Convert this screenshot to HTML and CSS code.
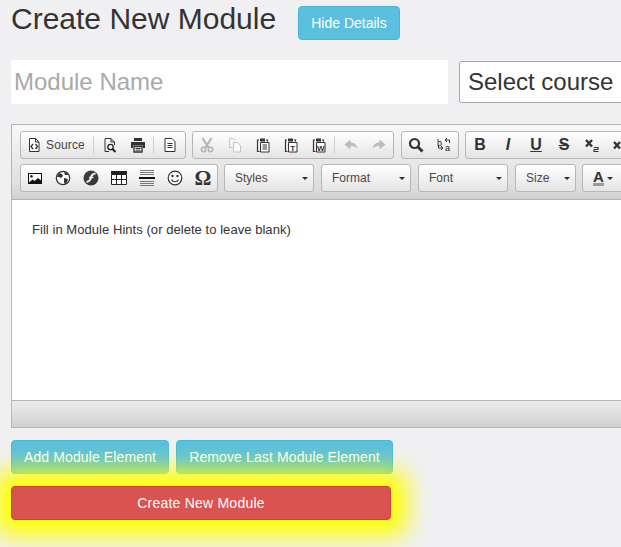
FILE: index.html
```html
<!DOCTYPE html>
<html lang="en">
<head>
    <meta charset="UTF-8">
    <meta name="viewport" content="width=device-width, initial-scale=1.0">
    <title>Create New Module</title>
    <link rel="stylesheet" href="styles.css">
</head>
<body>
    <svg class="icon-defs" width="0" height="0">
        <symbol id="i-source" viewBox="0 0 16 16"><path d="M3.500 1.500h6l3.500 3.500v9.500h-9.500z M9.500 1.500v3.500h3.500" fill="#fff" stroke="#333"/><path d="M7 7l-2 2.500 2 2.500M9.500 7l2 2.500-2 2.500" fill="none" stroke="#333" stroke-width="1.300"/></symbol>
        <symbol id="i-preview" viewBox="0 0 16 16"><path d="M7 14.500h-4v-13h6l3.500 3.500v3M9 1.500v3.500h3.500" fill="none" stroke="#333"/><circle cx="8.500" cy="10" r="2.700" fill="#fff" stroke="#222" stroke-width="1.300"/><path d="M10.500 12l3 3" stroke="#222" stroke-width="2"/></symbol>
        <symbol id="i-print" viewBox="0 0 16 16"><path d="M4 1h8v3h-8zM1 5h14v6h-2v-2.500h-10v2.500h-2z" fill="#333"/><path d="M4 9.500h8v5.500h-8z" fill="#fff" stroke="#333" stroke-width="1.400"/><path d="M5.500 11.500h5M5.500 13.200h5" stroke="#333"/></symbol>
        <symbol id="i-newpage" viewBox="0 0 16 16"><path d="M3 1.500h7l3 3v10h-10z" fill="#fff" stroke="#333"/><path d="M5.500 6.500h5M5.500 8.500h5M5.500 10.500h5" stroke="#333"/></symbol>
        <symbol id="i-cut" viewBox="0 0 16 16"><g fill="none" stroke="#b4b4b4" stroke-width="2"><path d="M3.500 1l6 9.500M12.500 1l-6 9.500"/><circle cx="4.500" cy="12.500" r="2.200" stroke-width="1.500"/><circle cx="11.500" cy="12.500" r="2.200" stroke-width="1.500"/></g></symbol>
        <symbol id="i-copy" viewBox="0 0 16 16"><path d="M2.500 1.500h4l2 2M2.500 1.500v9h3" fill="none" stroke="#c8c8c8"/><path d="M6.500 5.500h4l3 3v6.500h-7z" fill="#fafafa" stroke="#c4c4c4"/></symbol>
        <symbol id="i-paste" viewBox="0 0 16 16"><path d="M4 3h-1.500v11.500h2M11 3h1.500v1.500" fill="none" stroke="#333" stroke-width="1.200"/><path d="M5 1.500h5v3h-5z" fill="#333"/><path d="M5.500 5.500h8.500v9.500h-8.500z" fill="#fff" stroke="#333"/><path d="M7.500 8h4.500M7.500 10h4.500M7.500 12h4.500" stroke="#333"/></symbol>
        <symbol id="i-clip" viewBox="0 0 16 16"><path d="M4 3h-1.500v11.500h2M11 3h1.500v1.500" fill="none" stroke="#333" stroke-width="1.200"/><path d="M5 1.500h5v3h-5z" fill="#333"/><path d="M5.500 5.500h8.500v9.500h-8.500z" fill="#fff" stroke="#333"/></symbol>
        <symbol id="i-undo" viewBox="0 0 16 16"><path d="M1.500 7.500l6-5v3c4 0 6.500 2.500 7 6.500-1.500-2-3.500-3-7-3v3.500z" fill="#bcbcbc"/></symbol>
        <symbol id="i-redo" viewBox="0 0 16 16"><path d="M14.500 7.500l-6-5v3c-4 0-6.500 2.500-7 6.500 1.500-2 3.500-3 7-3v3.500z" fill="#bcbcbc"/></symbol>
        <symbol id="i-find" viewBox="0 0 16 16"><circle cx="6.500" cy="6.500" r="4.500" fill="none" stroke="#333" stroke-width="2.200"/><path d="M10 10l4.500 4.500" stroke="#333" stroke-width="3"/></symbol>
        <symbol id="i-image" viewBox="0 0 16 16"><path d="M1 3h14v11h-14z" fill="#111"/><path d="M2 4h12v6.500l-3-2.500-3.500 3-2-1.500-3.500 3z" fill="#fff"/><circle cx="4.500" cy="6.200" r="1.200" fill="#111"/></symbol>
        <symbol id="i-globe" viewBox="0 0 16 16"><circle cx="8" cy="8" r="6.700" fill="#fff" stroke="#333" stroke-width="1.200"/><path d="M4 3l3 1 1 2-2 2-2-1-2 0zM9 8l4 1-1 3-2 2.500-1-2.500zM9 2l3 1 1 2-3 0z" fill="#333"/></symbol>
        <symbol id="i-flash" viewBox="0 0 16 16"><circle cx="8" cy="8" r="7.500" fill="#3a3a3a"/><path d="M12.500 3.500c-3 .2-4 1.500-4.500 4-.4 2-1.300 3.800-4.500 4.500" fill="none" stroke="#eee" stroke-width="1.900"/><path d="M6 7.500h4.500" stroke="#eee" stroke-width="1.400"/></symbol>
        <symbol id="i-table" viewBox="0 0 16 16"><path d="M0 1h16v3h-16z" fill="#222"/><path d="M.500 4.500h15v10h-15zM5.500 4.500v10M10.500 4.500v10M.500 9.500h15" fill="#fff" stroke="#222"/></symbol>
        <symbol id="i-hr" viewBox="0 0 16 16"><path d="M1 .500h14M1 2.500h14M1 4.500h14M1 11.500h14M1 13.500h14M1 15.500h14" stroke="#777"/><path d="M0 8h16" stroke="#111" stroke-width="2"/></symbol>
        <symbol id="i-smile" viewBox="0 0 16 16"><circle cx="8" cy="8" r="6.800" fill="#fff" stroke="#333" stroke-width="1.200"/><circle cx="5.500" cy="6" r="1.200" fill="#333"/><circle cx="10.500" cy="6" r="1.200" fill="#333"/><path d="M4.500 9.500c1.500 3 5.500 3 7 0" fill="none" stroke="#333" stroke-width="1.200"/></symbol>
        <symbol id="i-sub" viewBox="0 0 16 16"><path d="M2 3l6 6.500M8 3l-6 6.500" stroke="#333" stroke-width="2.400"/><path d="M10 10.500h4v2h-4v2h4.500" fill="none" stroke="#333" stroke-width="1.100"/></symbol>
        <symbol id="i-sup" viewBox="0 0 16 16"><path d="M2 5l6 6.500M8 5l-6 6.500" stroke="#333" stroke-width="2.400"/></symbol>
    </svg>

    <div class="title-row">
        <h1>Create New Module</h1>
        <button type="button" class="btn btn-info btn-hide">Hide Details</button>
    </div>

    <form class="module-form">
        <div class="name-row">
            <input type="text" class="module-name" placeholder="Module Name">
            <select class="course-select"><option>Select course</option></select>
        </div>

        <div class="editor">
            <div class="toolbar">
                <div class="tool-row">
                    <div class="group group-doc">
                        <a class="tool tool-text"><svg><use href="#i-source"/></svg><span>Source</span></a>
                        <i class="sep"></i>
                        <a class="tool"><svg><use href="#i-preview"/></svg></a>
                        <a class="tool"><svg><use href="#i-print"/></svg></a>
                        <i class="sep"></i>
                        <a class="tool"><svg><use href="#i-newpage"/></svg></a>
                    </div>
                    <div class="group">
                        <a class="tool"><svg><use href="#i-cut"/></svg></a>
                        <a class="tool"><svg><use href="#i-copy"/></svg></a>
                        <a class="tool"><svg><use href="#i-paste"/></svg></a>
                        <a class="tool"><svg viewBox="0 0 16 16"><use href="#i-clip"/><text x="9.750" y="13.500" class="svg-tiny" text-anchor="middle">T</text></svg></a>
                        <a class="tool"><svg viewBox="0 0 16 16"><use href="#i-clip"/><text x="9.750" y="13.500" class="svg-tiny" text-anchor="middle">W</text></svg></a>
                        <i class="sep"></i>
                        <a class="tool"><svg><use href="#i-undo"/></svg></a>
                        <a class="tool"><svg><use href="#i-redo"/></svg></a>
                    </div>
                    <div class="group group-find">
                        <a class="tool"><svg><use href="#i-find"/></svg></a>
                        <a class="tool"><svg viewBox="0 0 16 16"><text x="1" y="8.500" class="svg-small">b</text><text x="9" y="14" class="svg-small">a</text><path d="M9 3h4.500v3M9 3l2-2M9 3l2 2M7 11h-4.500v-2.500M7 11l-2-2M7 11l-2 2" fill="none" stroke="#333"/></svg></a>
                    </div>
                    <div class="group">
                        <a class="tool glyph"><b>B</b></a>
                        <a class="tool glyph"><b><em>I</em></b></a>
                        <a class="tool glyph"><b class="under">U</b></a>
                        <a class="tool glyph"><b class="strike">S</b></a>
                        <a class="tool"><svg><use href="#i-sub"/></svg></a>
                        <a class="tool"><svg><use href="#i-sup"/></svg></a>
                    </div>
                </div>
                <div class="tool-row">
                    <div class="group">
                        <a class="tool"><svg><use href="#i-image"/></svg></a>
                        <a class="tool"><svg><use href="#i-globe"/></svg></a>
                        <a class="tool"><svg><use href="#i-flash"/></svg></a>
                        <a class="tool"><svg><use href="#i-table"/></svg></a>
                        <a class="tool"><svg><use href="#i-hr"/></svg></a>
                        <a class="tool"><svg><use href="#i-smile"/></svg></a>
                        <a class="tool glyph omega"><b>Ω</b></a>
                    </div>
                    <div class="group combo combo-wide"><span>Styles</span><i class="caret"></i></div>
                    <div class="group combo combo-wide"><span>Format</span><i class="caret"></i></div>
                    <div class="group combo combo-wide"><span>Font</span><i class="caret"></i></div>
                    <div class="group combo combo-size"><span>Size</span><i class="caret"></i></div>
                    <div class="group">
                        <a class="tool tool-color"><b>A</b><i class="caret"></i></a>
                    </div>
                </div>
            </div>
            <div class="editor-body">
                <p>Fill in Module Hints (or delete to leave blank)</p>
            </div>
            <div class="editor-bottom"></div>
        </div>

        <div class="element-btns">
            <button type="button" class="btn btn-info btn-add">Add Module Element</button>
            <button type="button" class="btn btn-info btn-remove">Remove Last Module Element</button>
        </div>
        <button type="submit" class="btn btn-danger btn-create">Create New Module</button>
    </form>
</body>
</html>
```
FILE: styles.css
```css
html, body {
    height: 100%;
    margin: 0;
    padding: 0;
    overflow: hidden;
}
body {
    background: #f0f0f3;
    color: #333;
    font-family: "Liberation Sans", Arial, sans-serif;
    padding-left: 11px;
    width: 900px;
}
.icon-defs { position: absolute; }
.svg-tiny { font: bold 8px "Liberation Sans", sans-serif; fill: #333; }
.svg-small { font: 9px "Liberation Sans", sans-serif; fill: #222; }

.title-row {
    display: flex;
    align-items: flex-start;
    height: 60px;
}
h1 {
    margin: 0;
    width: 287px;
    font-size: 30px;
    font-weight: 400;
    line-height: 38px;
    color: #333;
}
.btn {
    display: block;
    height: 34px;
    padding: 0;
    font-family: inherit;
    font-size: 14px;
    letter-spacing: .12px;
    border-radius: 4px;
    border: 1px solid transparent;
    color: #fff;
    cursor: pointer;
}
.btn-info { background: #5bc0de; border-color: #46b8da; }
.btn-danger { background: #d9534f; border-color: #d43f3a; }
.btn-hide { width: 102px; margin-top: 6px; letter-spacing: 0; }

.name-row {
    display: flex;
    align-items: center;
    gap: 11px;
    height: 44px;
}
.module-name {
    width: 437px;
    height: 44px;
    box-sizing: border-box;
    padding: 0 3px;
    border: none;
    background: #fff;
    font-family: inherit;
    font-size: 24px;
}
.module-name::placeholder { color: #a9a9a9; opacity: 1; }
.course-select {
    appearance: none;
    width: 300px;
    height: 42px;
    padding: 0 8px 2px;
    background: #fff;
    border: 1px solid #a9a9a9;
    border-radius: 2px;
    font-family: inherit;
    font-size: 24px;
    color: #333;
}

.editor {
    width: 760px;
    margin-top: 20px;
    border: 1px solid #b6b6b6;
    box-sizing: border-box;
}
.toolbar {
    background: linear-gradient(#f8f8f8, #dcdddc 85%, #cfd1cf);
    border-bottom: 1px solid #b6b6b6;
    padding: 6px 8px 7px;
    height: 75px;
    box-sizing: border-box;
}
.tool-row {
    display: flex;
    gap: 6px;
    height: 28px;
    margin-bottom: 5px;
}
.group {
    display: flex;
    align-items: center;
    height: 28px;
    box-sizing: border-box;
    border: 1px solid #b6b6b6;
    border-radius: 3px;
    background: linear-gradient(#fff, #e4e4e4);
}
.group-doc { padding-right: 1px; }
.group-find { margin-left: 1px; }
.tool {
    display: flex;
    align-items: center;
    justify-content: center;
    width: 28px;
    height: 26px;
    flex: none;
}
.tool svg { width: 16px; height: 16px; }
.tool-text {
    width: 71px;
    justify-content: flex-start;
    gap: 4px;
    padding-left: 5px;
    box-sizing: border-box;
}
.tool-text span { font-size: 12px; letter-spacing: .15px; color: #474747; }
.sep {
    width: 1px;
    height: 18px;
    margin: 0 2px 0 1px;
    background: #d0d0d0;
    flex: none;
}
.glyph { font-size: 16px; color: #333; }
.glyph .under { text-decoration: underline; }
.glyph .strike { text-decoration: line-through; }
.omega { font-family: "Liberation Serif", serif; font-size: 21px; }

.combo {
    justify-content: space-between;
    padding: 0 5px 0 10px;
    font-size: 12px;
    color: #484848;
}
.combo + .combo { margin-left: 1px; }
.combo-wide { width: 90px; }
.combo-size { width: 61px; margin-left: 0; }
.caret {
    width: 0;
    height: 0;
    border-left: 3px solid transparent;
    border-right: 3px solid transparent;
    border-top: 3px solid #2f2f2f;
}
.tool-color { width: 40px; gap: 3px; font-size: 15px; }
.tool-color b { border-bottom: 3px solid #999; line-height: 13px; }

.editor-body {
    height: 200px;
    background: #fff;
    box-sizing: border-box;
    padding: 21px 20px 0;
}
.editor-body p {
    margin: 0;
    font-size: 13px;
    letter-spacing: .05px;
    line-height: 18px;
    color: #333;
}
.editor-bottom {
    height: 27px;
    background: linear-gradient(#ebebeb, #cfd1cf);
    border-top: 1px solid #b6b6b6;
    box-sizing: border-box;
}

.element-btns {
    display: flex;
    gap: 7px;
    margin-top: 12px;
}
.btn-add { width: 158px; }
.btn-remove { width: 217px; }
.btn-create {
    position: relative;
    width: 380px;
    margin-top: 12px;
    letter-spacing: .22px;
    box-shadow: 0 0 24px 16px #ff0;
}
```
